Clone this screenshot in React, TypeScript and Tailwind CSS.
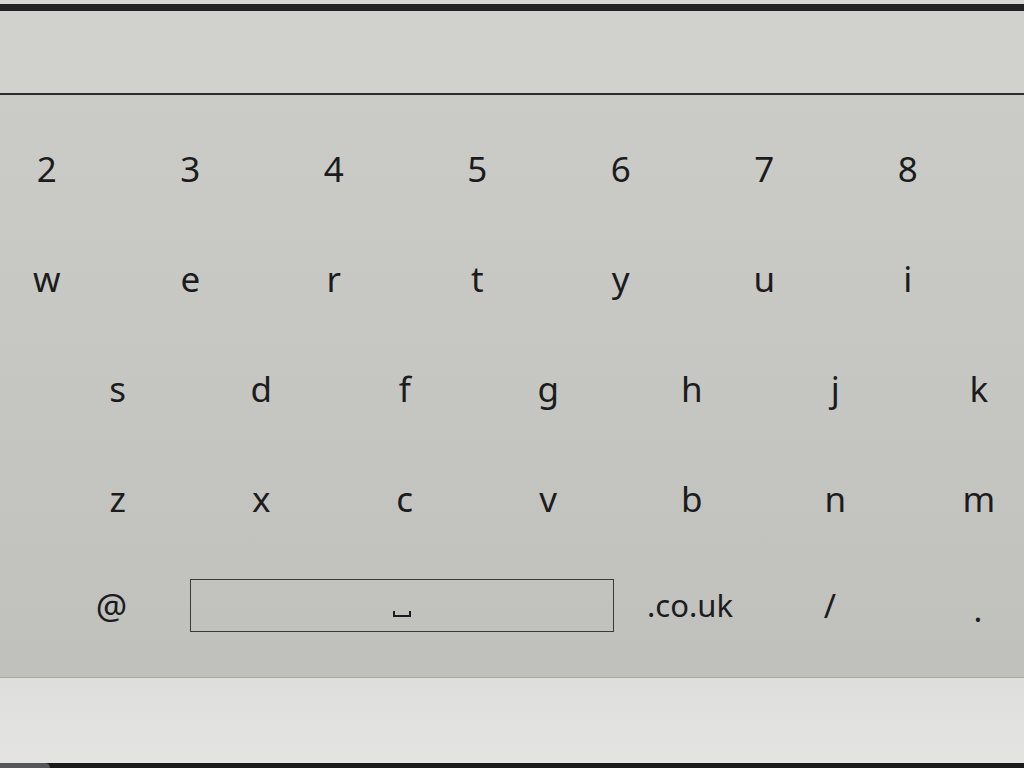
const row1 = ['2', '3', '4', '5', '6', '7', '8'];
const row2 = ['w', 'e', 'r', 't', 'y', 'u', 'i'];
const row3 = ['s', 'd', 'f', 'g', 'h', 'j', 'k'];
const row4 = ['z', 'x', 'c', 'v', 'b', 'n', 'm'];

function Key({ label }: { label: string }) {
  return (
    <div className="w-[143.5px] shrink-0 flex items-center justify-center text-[35px] leading-none text-[#1c1c1e]">
      {label}
    </div>
  );
}

export default function App() {
  return (
    <div
      className="w-[1024px] h-[768px] overflow-hidden flex flex-col bg-[#c8c9c5]"
      style={{ fontFamily: '"Noto Sans", "Open Sans", sans-serif' }}
    >
      {/* top text field strip */}
      <div className="h-[4px] bg-[#d8d9d5]" />
      <div className="h-[7px] bg-[#232327]" />
      <div className="h-[82px] bg-[#d1d2ce]" />
      <div className="h-[2px] bg-[#2d2d30]" />

      {/* keyboard */}
      <div className="h-[582px] flex flex-col pt-[18px] bg-gradient-to-b from-[#cbccc8] to-[#c0c1bd]">
        <div className="h-[110px] flex items-center ml-[-25px]">
          {row1.map((k) => <Key key={k} label={k} />)}
        </div>
        <div className="h-[110px] flex items-center ml-[-25px]">
          {row2.map((k) => <Key key={k} label={k} />)}
        </div>
        <div className="h-[110px] flex items-center ml-[46px]">
          {row3.map((k) => <Key key={k} label={k} />)}
        </div>
        <div className="h-[110px] flex items-center ml-[46px]">
          {row4.map((k) => <Key key={k} label={k} />)}
        </div>
        <div className="h-[110px] flex items-center ml-[40px] -mt-[3px]">
          <div className="w-[143px] shrink-0 flex items-center justify-center text-[35px] leading-none text-[#1c1c1e]">@</div>
          <div className="w-[424px] h-[53px] shrink-0 border-[1.5px] border-[#3a3a3c] flex items-end justify-center pb-[14px] ml-[7px]">
            <div className="w-[18px] h-[6px] border-x-2 border-b-2 border-[#1c1c1e]" />
          </div>
          <div className="w-[152px] shrink-0 flex items-center justify-center text-[31px] leading-none text-[#1c1c1e]">.co.uk</div>
          <div className="w-[128px] shrink-0 flex items-center justify-center text-[33px] leading-none text-[#1c1c1e]">/</div>
          <div className="w-[168px] shrink-0 flex items-center justify-center text-[33px] leading-none text-[#1c1c1e] pt-[8px]">.</div>
        </div>
      </div>

      {/* bezel */}
      <div className="h-[1px] bg-[#a9aaa7]" />
      <div className="flex-1 bg-gradient-to-b from-[#dededc] to-[#e4e4e2]" />
      <div className="h-[5px] bg-[#1b1b1d] flex">
        <div className="w-[50px] bg-[#55575a] rounded-tr-full" />
      </div>
    </div>
  );
}
